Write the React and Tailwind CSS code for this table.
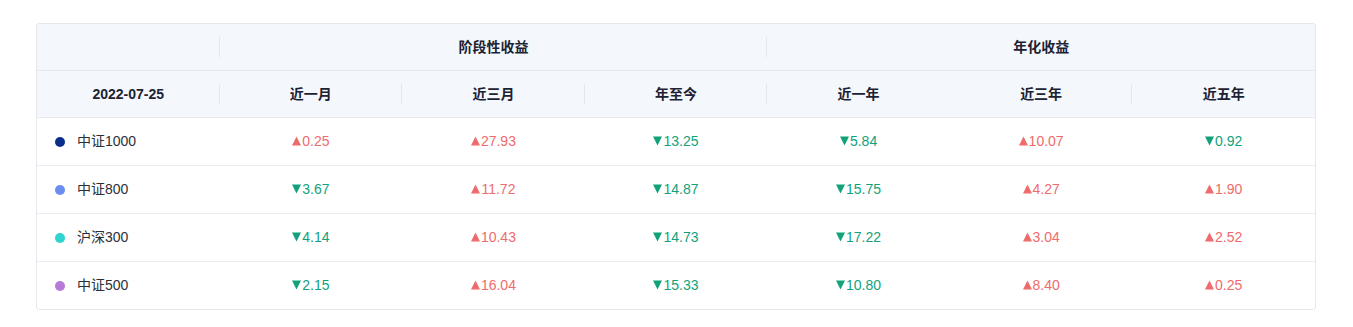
import React from 'react';

const rows = [
  { name: '中证1000', dot: 'bg-[#0b2e8c]', vals: [0.25, 27.93, -13.25, -5.84, 10.07, -0.92] },
  { name: '中证800', dot: 'bg-[#6b8df2]', vals: [-3.67, 11.72, -14.87, -15.75, 4.27, 1.9] },
  { name: '沪深300', dot: 'bg-[#2fd3d0]', vals: [-4.14, 10.43, -14.73, -17.22, 3.04, 2.52] },
  { name: '中证500', dot: 'bg-[#b67bd9]', vals: [-2.15, 16.04, -15.33, -10.8, 8.4, 0.25] },
];

const Sep = () => (
  <span className="absolute right-0 top-1/2 -translate-y-1/2 w-px h-[20px] bg-[#e3e6eb]" />
);

const HeadCell = ({ children, sep, span = '' }) => (
  <div className={`relative flex items-center justify-center h-[46px] ${span}`}>
    {children}
    {sep && <Sep />}
  </div>
);

const Value = ({ v }) => {
  const up = v >= 0;
  return (
    <div className={`flex items-center justify-center h-[47px] ${up ? 'text-[#f06b6b]' : 'text-[#11a27c]'}`}>
      <svg width="9" height="10" viewBox="0 0 9 10" className="mr-px -mt-px" fill="currentColor">
        {up ? <path d="M4.5 0.5L9 9.5H0Z" /> : <path d="M0 0.5H9L4.5 9.5Z" />}
      </svg>
      <span>{Math.abs(v).toFixed(2)}</span>
    </div>
  );
};

export default function App() {
  return (
    <div className="bg-white w-[1353px] h-[327px] pt-[23px] pl-[36px]" style={{ fontFamily: '"Liberation Sans", Arial, "Noto Sans CJK SC", sans-serif' }}>
      <div className="w-[1280px] border border-[#e4e7ec] rounded-[3px] overflow-hidden text-[14px]">
        <div className="bg-[#f4f7fb] text-[#1c2233] font-bold">
          <div className="grid grid-cols-7 border-b border-[#e6e9ee]">
            <HeadCell sep />
            <HeadCell sep span="col-span-3">阶段性收益</HeadCell>
            <HeadCell span="col-span-3">年化收益</HeadCell>
          </div>
          <div className="grid grid-cols-7 border-b border-[#e6e9ee]">
            <HeadCell sep>2022-07-25</HeadCell>
            <HeadCell sep>近一月</HeadCell>
            <HeadCell sep>近三月</HeadCell>
            <HeadCell sep>年至今</HeadCell>
            <HeadCell>近一年</HeadCell>
            <HeadCell sep>近三年</HeadCell>
            <HeadCell>近五年</HeadCell>
          </div>
        </div>
        {rows.map((r, i) => (
          <div key={r.name} className={`grid grid-cols-7 ${i < rows.length - 1 ? 'border-b border-[#e8ebef]' : ''}`}>
            <div className="flex items-center h-[47px] pl-[18px] text-[#2b2f3a]">
              <span className={`w-[10px] h-[10px] rounded-full ${r.dot}`} />
              <span className="ml-[12px]">{r.name}</span>
            </div>
            {r.vals.map((v, j) => (
              <Value key={j} v={v} />
            ))}
          </div>
        ))}
      </div>
    </div>
  );
}
